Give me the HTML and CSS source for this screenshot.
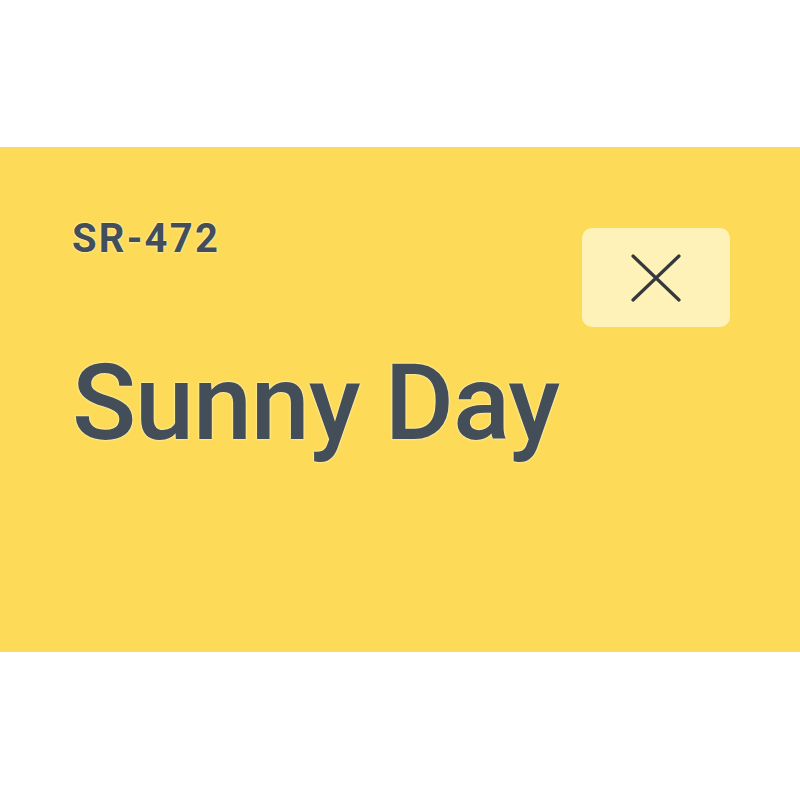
FILE: index.html
```html
<!DOCTYPE html>
<html>
<head>
<meta charset="utf-8">
<link rel="stylesheet" href="styles.css">
</head>
<body>
<div class="page">
  <section class="banner">
    <div class="content">
      <div class="code">SR-472</div>
      <h1 class="title">Sunny Day</h1>
    </div>
    <button class="close" aria-label="Close">
      <svg viewBox="0 0 50 48" width="50" height="48">
        <path d="M2 2 L48 46 M48 2 L2 46" stroke="#35393d" stroke-width="3.2" stroke-linecap="round" fill="none"/>
      </svg>
    </button>
  </section>
</div>
</body>
</html>
```
FILE: styles.css
```css
html, body {
  margin: 0;
  padding: 0;
  background: #ffffff;
}
.page {
  width: 800px;
  height: 800px;
  display: flex;
  flex-direction: column;
  padding-top: 147px;
  box-sizing: border-box;
}
.banner {
  height: 505px;
  background: #fddb58;
  display: flex;
  justify-content: space-between;
  align-items: flex-start;
  padding: 0 70px 0 72px;
  box-sizing: border-box;
  font-family: Roboto, "Noto Sans", sans-serif;
}
.content {
  display: flex;
  flex-direction: column;
  padding-top: 68px;
}
.code {
  font-size: 40px;
  font-weight: 700;
  color: #434e58;
  line-height: 48px;
  letter-spacing: 2.2px;
  text-shadow: 0 0 2px #fff6c8, 0 0 2px #fff6c8;
}
.title {
  margin: 87px 0 0 0;
  font-size: 106px;
  font-weight: 500;
  color: #434e58;
  line-height: 106px;
  letter-spacing: -1.1px;
  white-space: nowrap;
  text-shadow: 0 0 2px #fff6c8, 0 0 2px #fff6c8;
}
.close {
  margin-top: 81px;
  width: 148px;
  height: 99px;
  border: none;
  border-radius: 10px;
  background: #fef2b8;
  display: flex;
  align-items: center;
  justify-content: center;
  padding: 0;
}
```
